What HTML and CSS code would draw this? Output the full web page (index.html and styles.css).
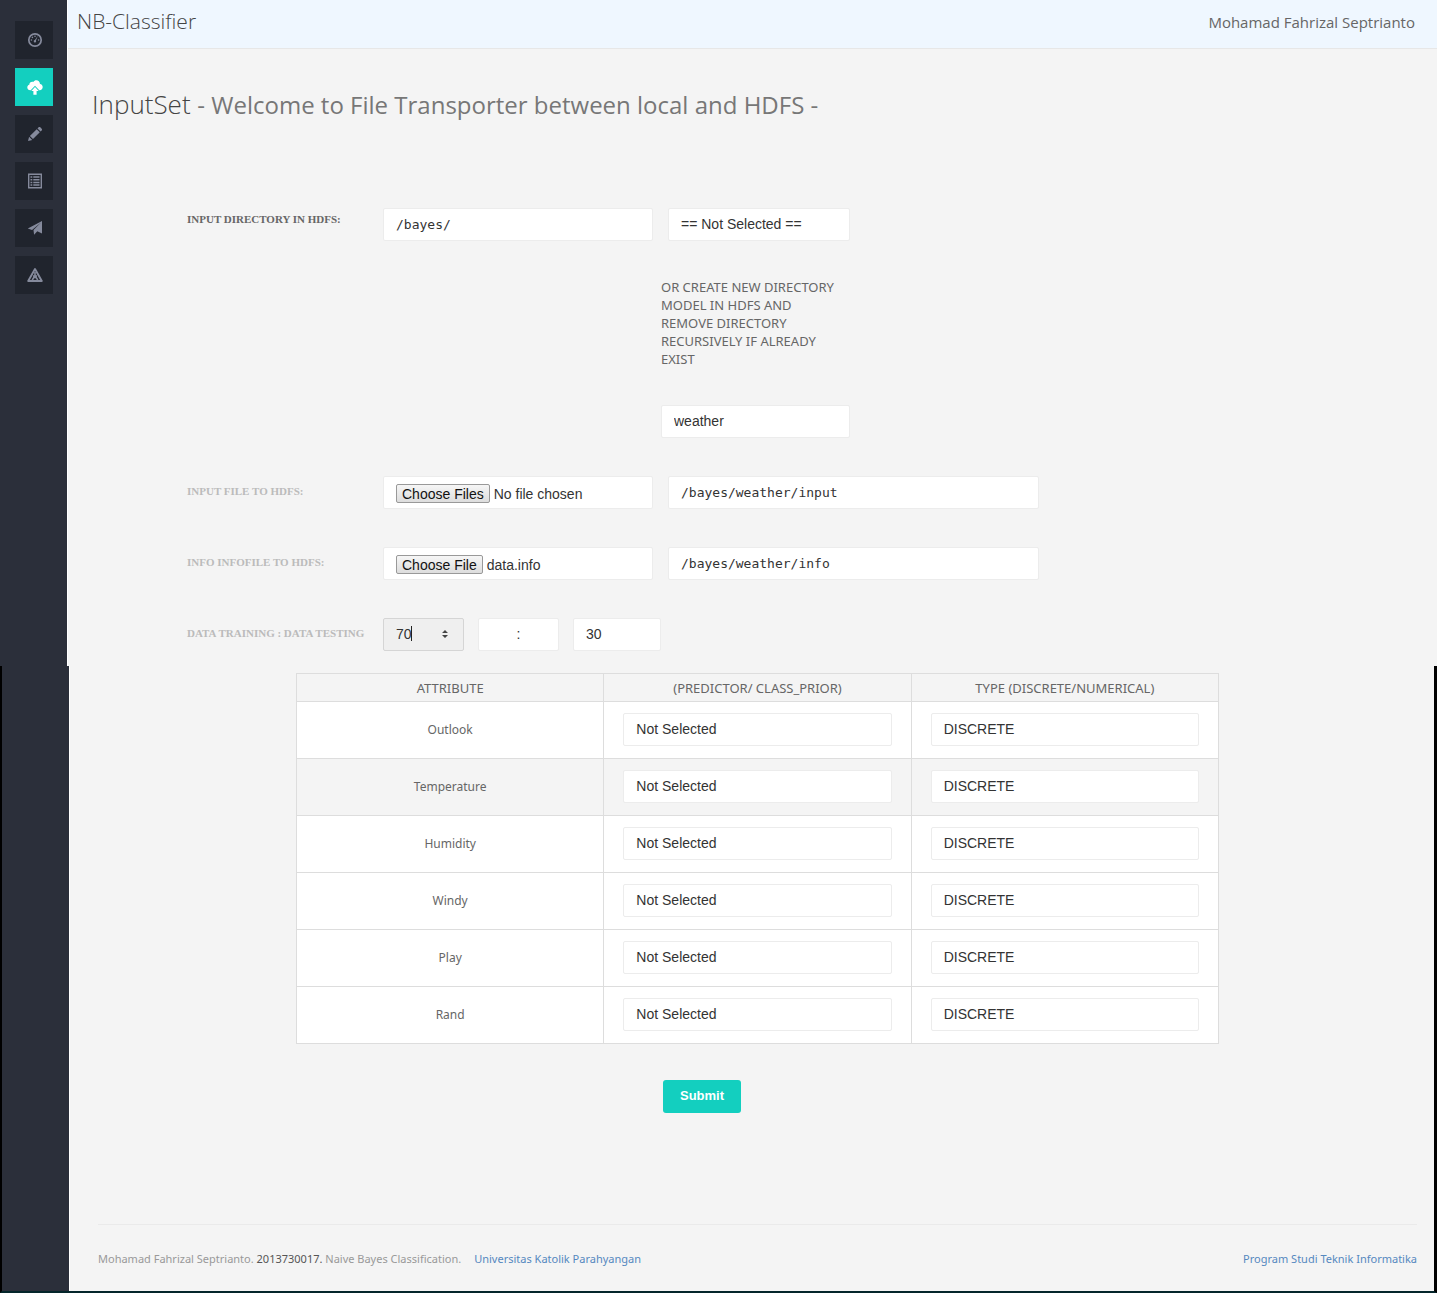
FILE: index.html
```html
<!DOCTYPE html>
<html lang="en">
<head>
<meta charset="utf-8">
<title>NB-Classifier - InputSet</title>
<link rel="stylesheet" href="styles.css">
</head>
<body>
<div class="band">
  <nav class="sidebar" aria-label="Main">
    <a href="#dashboard" class="nav-item" aria-label="Dashboard"><svg viewBox="0 0 16 16"><circle cx="8" cy="8" r="6.2" fill="none" stroke="currentColor" stroke-width="1.7"/><path d="M10.9 3.8 8.9 8.6a1.2 1.2 0 1 1-1-.5z" fill="currentColor"/><g fill="currentColor"><circle cx="4.4" cy="8" r=".8"/><circle cx="5.4" cy="5.4" r=".8"/><circle cx="8" cy="4.2" r=".8"/><circle cx="11.6" cy="8" r=".8"/></g></svg></a>
    <a href="#upload" class="nav-item active" aria-label="Upload"><svg viewBox="0 0 16 16"><path d="M3.300 11.300C1.500 11.300 .3 10 .3 8.500c0-1.300.8-2.400 2-2.700C2.300 4 3.700 2.800 5.200 2.800c.4 0 .8.100 1.100.2C7 1.800 8.100 1.300 9.300 1.300c2 0 3.600 1.600 3.700 3.600 1.600.1 2.700 1.500 2.700 3.100 0 1.800-1.300 3.300-3 3.300h-.4L8 6.700l-4.300 4.600z" fill="currentColor"/><path d="M8 8l3.700 4H9.600v3.700H6.400V12H4.300z" fill="currentColor"/></svg></a>
    <a href="#edit" class="nav-item" aria-label="Edit"><svg viewBox="0 0 16 16"><path d="M1 15l1.100-4.200 3.100 3.100zM2.900 10l6.800-6.800 3.100 3.100L6 13.100zM10.500 2.400l1.100-1.100c.5-.5 1.200-.5 1.700 0l1.400 1.400c.5.500.5 1.200 0 1.700l-1.100 1.100z" fill="currentColor"/></svg></a>
    <a href="#list" class="nav-item" aria-label="List"><svg viewBox="0 0 16 16"><path d="M1.700 1.200h12.600v13.600H1.700z" fill="none" stroke="currentColor" stroke-width="1.400"/><path d="M3.500 4h1.800M3.500 6.700h1.800M3.500 9.400h1.800M3.500 12h1.800M6.300 4h6.200M6.300 6.700h6.200M6.300 9.400h6.200M6.300 12h6.200" stroke="currentColor" stroke-width="1.500"/></svg></a>
    <a href="#send" class="nav-item" aria-label="Send"><svg viewBox="0 0 16 16"><path d="M15 1v12.500l-4.700-2.300-3.200 3.600-.6-4.900L14 2.500 5 9.900.8 8.600z" fill="currentColor"/></svg></a>
    <a href="#alerts" class="nav-item" aria-label="Alerts"><svg viewBox="0 0 16 16"><path d="M8 2l6.800 12H1.200z" fill="none" stroke="currentColor" stroke-width="1.900" stroke-linejoin="round"/><path d="M8 5v4.500M5.200 13l1.600-2.500h2.400l1.600 2.500M6 9h4" fill="none" stroke="currentColor" stroke-width="1.600"/></svg></a>
  </nav>
  <div class="main">
    <header class="topbar">
      <a href="#home" class="brand">NB-Classifier</a>
      <span class="user">Mohamad Fahrizal Septrianto</span>
    </header>
    <h1 class="title">InputSet <small>- Welcome to File Transporter between local and HDFS -</small></h1>
    <form id="transfer" class="form">
      <label class="label strong" for="dir">INPUT DIRECTORY IN HDFS:</label>
      <input id="dir" class="control mono" type="text" value="/bayes/">
      <div class="model">
        <select class="control" aria-label="Model directory"><option>== Not Selected ==</option></select>
        <label class="hint" for="model">OR CREATE NEW DIRECTORY MODEL IN HDFS AND REMOVE DIRECTORY RECURSIVELY IF ALREADY EXIST</label>
        <input id="model" class="control new-model" type="text" value="weather">
      </div>

      <label class="label" for="files">INPUT FILE TO HDFS:</label>
      <input id="files" class="control" type="file" multiple>
      <input class="control mono" type="text" value="/bayes/weather/input" aria-label="Input path">

      <label class="label" for="info">INFO INFOFILE TO HDFS:</label>
      <input id="info" class="control" type="file">
      <input class="control mono" type="text" value="/bayes/weather/info" aria-label="Info path">

      <label class="label" for="training">DATA TRAINING : DATA TESTING</label>
      <div class="ratio">
        <div class="stepper">
          <input id="training" class="control focused" type="number" value="70">
          <span class="caret"></span>
          <svg class="arrows" viewBox="0 0 6 8"><path d="M0 3l3-3 3 3zM0 5h6L3 8z" fill="#444"/></svg>
        </div>
        <input class="control center" type="text" value=":" aria-label="Separator" readonly>
        <input class="control" type="text" value="30" aria-label="Data testing">
      </div>
    </form>
  </div>
</div>

<div class="band lower">
  <div class="sidebar"></div>
  <div class="main">
    <div class="attributes">
      <table class="table">
        <thead><tr><th>ATTRIBUTE</th><th>(PREDICTOR/ CLASS_PRIOR)</th><th>TYPE (DISCRETE/NUMERICAL)</th></tr></thead>
        <tbody>
          <tr><td>Outlook</td><td><select class="control" form="transfer" aria-label="Outlook role"><option>Not Selected</option></select></td><td><select class="control" form="transfer" aria-label="Outlook type"><option>DISCRETE</option></select></td></tr>
          <tr class="hover"><td>Temperature</td><td><select class="control" form="transfer" aria-label="Temperature role"><option>Not Selected</option></select></td><td><select class="control" form="transfer" aria-label="Temperature type"><option>DISCRETE</option></select></td></tr>
          <tr><td>Humidity</td><td><select class="control" form="transfer" aria-label="Humidity role"><option>Not Selected</option></select></td><td><select class="control" form="transfer" aria-label="Humidity type"><option>DISCRETE</option></select></td></tr>
          <tr><td>Windy</td><td><select class="control" form="transfer" aria-label="Windy role"><option>Not Selected</option></select></td><td><select class="control" form="transfer" aria-label="Windy type"><option>DISCRETE</option></select></td></tr>
          <tr><td>Play</td><td><select class="control" form="transfer" aria-label="Play role"><option>Not Selected</option></select></td><td><select class="control" form="transfer" aria-label="Play type"><option>DISCRETE</option></select></td></tr>
          <tr><td>Rand</td><td><select class="control" form="transfer" aria-label="Rand role"><option>Not Selected</option></select></td><td><select class="control" form="transfer" aria-label="Rand type"><option>DISCRETE</option></select></td></tr>
        </tbody>
      </table>
    </div>
    <div class="actions"><button class="submit" type="submit" form="transfer">Submit</button></div>
    <footer class="footer">
      <span>Mohamad Fahrizal Septrianto. <b>2013730017.</b> Naive Bayes Classification.</span>
      <a href="#unpar">Universitas Katolik Parahyangan</a>
      <a href="#informatika" class="end">Program Studi Teknik Informatika</a>
    </footer>
  </div>
</div>
<script src="script.js"></script>
</body>
</html>
```
FILE: styles.css
```css
* { box-sizing: border-box; }
body {
  margin: 0;
  min-height: 100vh;
  display: flex;
  flex-direction: column;
  background: #f4f4f4;
  color: #666;
  font: 13px/18px "Noto Sans", "Open Sans", sans-serif;
}
a { color: #5588bf; text-decoration: none; }

.band { display: flex; }
.lower {
  flex: 1;
  border: solid #000;
  border-width: 0 3px 2px 2px;
  border-bottom-color: #04262b;
}
.sidebar {
  flex: none;
  width: 67px;
  padding: 21px 0 0 15px;
  background: #2b2f3a;
  display: flex;
  flex-direction: column;
  gap: 9px;
}
.nav-item {
  width: 38px;
  height: 38px;
  padding-left: 1px;
  display: flex;
  align-items: center;
  justify-content: center;
  background: #20242d;
  color: #858a9c;
}
.nav-item svg { width: 16px; height: 16px; }
.nav-item.active { background: #13cfbf; color: #fff; }

.main { flex: 1; min-width: 0; display: flex; flex-direction: column; border-left: 1px solid #fff; }
.topbar {
  height: 49px;
  padding: 0 22px 6px 9px;
  display: flex;
  align-items: center;
  justify-content: space-between;
  background: #eff7ff;
  border-bottom: 1px solid #e7e7e7;
}
.brand { font: 300 21px/30px "Open Sans", sans-serif; color: #444; }
.user { font: 15px/20px "Open Sans", sans-serif; padding-top: 2px; }
.title {
  margin: 37px 24px 0;
  font: 300 26px/36px "Open Sans", sans-serif;
  color: #444;
}
.title small { font: 400 24px/36px "Open Sans", sans-serif; color: #777; }

.form {
  margin: 85px 24px 15px 119px;
  display: grid;
  grid-template-columns: 181px minmax(0, 270px) minmax(0, 371px);
  gap: 38px 15px;
  align-items: start;
}
.label {
  padding-top: 9px;
  font: bold 11px/12px "Liberation Serif", serif;
  color: #bbb;
  white-space: nowrap;
}
.label.strong { padding-top: 5px; color: #666; }
.control {
  display: block;
  width: 100%;
  height: 33px;
  margin: 0;
  padding: 0 12px 2px;
  border: 1px solid #ececec;
  border-radius: 2px;
  background: #fff;
  color: #333;
  font: 14px/18px "Liberation Sans", Arial, sans-serif;
  appearance: none;
  outline: 0;
}
.mono { padding-bottom: 0; font: 13px/18px "DejaVu Sans Mono", monospace; }
.center { text-align: center; }
.control[type="file"] { padding: 5px 12px; }
.control::file-selector-button {
  height: 19px;
  margin: 2px 4px 0 0;
  padding: 0 5px;
  border: 1px solid #999;
  border-radius: 2px;
  background: linear-gradient(#f6f6f6, #ddd);
  color: #111;
  font: 14px/16px "Liberation Sans", Arial, sans-serif;
}
.control::-webkit-inner-spin-button { appearance: none; }
.model { width: 182px; }
.hint { display: block; margin: 37px 0 37px -7px; width: 180px; }
.new-model { width: 189px; margin-left: -7px; }
.ratio {
  display: grid;
  grid-template-columns: 81px 81px 88px;
  gap: 14px;
}
.stepper { position: relative; }
.focused { background: #efefef; border-color: #d5d5d5; }
.caret { position: absolute; left: 28px; top: 8px; width: 1px; height: 15px; background: #222; }
.arrows { position: absolute; right: 16px; top: 12px; width: 6px; height: 8px; }

.attributes { padding: 7px 215px 0 226px; }
.table { width: 100%; table-layout: fixed; border-collapse: collapse; background: #fff; text-align: center; }
.table th, .table td { border: 1px solid #ddd; }
.table th { height: 28px; padding: 0; font-weight: 400; background: #f4f4f4; }
.table td { height: 57px; padding: 0 19px 1px; font-size: 12px; }
.hover { background: #f4f4f4; }
.actions { padding: 36px 0 0 593px; }
.submit {
  width: 78px;
  height: 33px;
  padding: 0 0 2px;
  border: 0;
  border-radius: 3px;
  background: #13cfbf;
  color: #fff;
  font: bold 13px/18px "Liberation Sans", Arial, sans-serif;
}
.footer {
  margin: auto 17px 0 28px;
  padding: 25px 0 23px;
  border-top: 1px solid #eaeaea;
  display: flex;
  gap: 13px;
  font-size: 11px;
  color: #999;
}
.footer b { font-weight: 400; color: #555; }
.end { margin-left: auto; }
```
FILE: script.js
```js
const picked = new DataTransfer();
picked.items.add(new File([""], "data.info"));
document.getElementById("info").files = picked.files;
```
